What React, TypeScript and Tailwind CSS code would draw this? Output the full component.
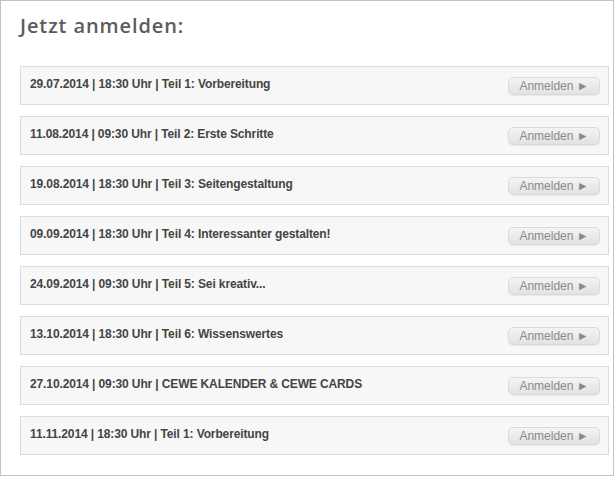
import React from "react";

const rows = [
  "29.07.2014 | 18:30 Uhr | Teil 1: Vorbereitung",
  "11.08.2014 | 09:30 Uhr | Teil 2: Erste Schritte",
  "19.08.2014 | 18:30 Uhr | Teil 3: Seitengestaltung",
  "09.09.2014 | 18:30 Uhr | Teil 4: Interessanter gestalten!",
  "24.09.2014 | 09:30 Uhr | Teil 5: Sei kreativ...",
  "13.10.2014 | 18:30 Uhr | Teil 6: Wissenswertes",
  "27.10.2014 | 09:30 Uhr | CEWE KALENDER & CEWE CARDS",
  "11.11.2014 | 18:30 Uhr | Teil 1: Vorbereitung",
];

export default function App() {
  return (
    <div className="w-[615px] h-[477px] bg-white">
      <div className="w-[614px] h-[476px] border border-[#c3c3c3] pl-[19px] pr-[4px] pt-[12px]">
        <h2
          className="text-[20px] leading-[26px] text-[#5c5c5c] tracking-[0.9px] mb-[27px]"
          style={{ fontFamily: "'Open Sans', sans-serif", fontWeight: 600 }}
        >
          Jetzt anmelden:
        </h2>
        <div className="flex flex-col gap-[11px]">
          {rows.map((r, i) => (
            <div
              key={i}
              className="h-[39px] border border-[#dcdcdc] bg-[#f7f7f7] flex items-center justify-between pl-[9px] pr-[8px]"
            >
              <span
                className="text-[12px] font-bold text-[#444] tracking-[-0.12px] pb-[3px]"
                style={{ fontFamily: "'Liberation Sans', Arial, sans-serif" }}
              >
                {r}
              </span>
              <button
                className="w-[92px] h-[18px] rounded-[5px] border border-[#dadada] bg-gradient-to-b from-[#f4f4f4] to-[#e2e2e2] text-[12px] text-[#8a8a8a] flex items-center justify-center leading-none shadow-[0_1px_1px_rgba(0,0,0,0.06)]"
                style={{ fontFamily: "'Liberation Sans', Arial, sans-serif" }}
              >
                Anmelden ►
              </button>
            </div>
          ))}
        </div>
      </div>
    </div>
  );
}
